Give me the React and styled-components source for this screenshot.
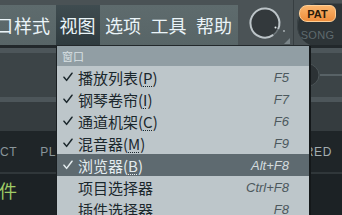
import React from "react";
import styled, { createGlobalStyle } from "styled-components";

const Global = createGlobalStyle`
  html, body { margin: 0; padding: 0; background: #1d2326; }
  body { width: 342px; height: 215px; overflow: hidden; }
`;

const Page = styled.div`
  position: relative;
  width: 342px;
  height: 215px;
  overflow: hidden;
  background: #1d2326;
  display: flex;
  flex-direction: column;
  font-family: "Noto Sans CJK SC", "Noto Sans", sans-serif;
`;

const TopBar = styled.div`
  height: 45px;
  flex: none;
  display: flex;
  background: #4a5255;
`;

const MenuPanel = styled.div`
  margin-top: 5px;
  width: 238px;
  flex: none;
  display: flex;
  gap: 1.5px;
  overflow: hidden;
  background: linear-gradient(#5e6b6d, #586567);
`;

const MenuItem = styled.div`
  flex: none;
  display: flex;
  align-items: center;
  padding: 0 4px;
  font-size: 18px;
  line-height: 1;
  color: #eaf4f8;
  background: ${(p) => (p.$active ? "linear-gradient(#3f4c50, #2f3b3f)" : "transparent")};
`;

const ClippedItem = styled(MenuItem)`
  padding: 0;
  margin-left: -5px;
  margin-right: -4.5px;
`;

const KnobPanel = styled.div`
  margin-left: 2px;
  width: 53px;
  flex: none;
  display: flex;
  border-right: 1px solid #373e41;
  background: #4b5356;
`;

const PatArea = styled.div`
  flex: 1;
  padding: 3px 0 0 3px;
  display: flex;
`;

const PatShape = styled.div`
  flex: 1;
  height: 42px;
  border-radius: 22px 0 0 22px;
  background: #2d3437;
  box-shadow: inset 1px 1px 0 #3c4447;
  display: flex;
  flex-direction: column;
  align-items: flex-start;
  padding: 2px 0 0 2px;
`;

const PatButton = styled.div`
  width: 37px;
  height: 17px;
  box-sizing: border-box;
  border-radius: 8px 6px 6px 8px;
  border: 1px solid #ffcf96;
  background: linear-gradient(#fbb56c, #ee8d3c);
  color: #2a1a0a;
  font-family: "Liberation Sans", sans-serif;
  font-size: 11px;
  font-weight: 700;
  display: flex;
  align-items: center;
  justify-content: center;
`;

const SongLabel = styled.div`
  width: 37px;
  margin-top: 7px;
  text-align: center;
  color: #5f6a6e;
  font-family: "Liberation Sans", sans-serif;
  font-size: 11px;
  letter-spacing: 0.3px;
`;

const Band = styled.div`
  flex: none;
  height: ${(p) => p.$h}px;
  background: ${(p) => p.$bg};
  position: relative;
  display: flex;
  align-items: center;
`;

const TabRow = styled.div`
  flex: none;
  height: 41px;
  background: #1f2528;
  display: flex;
  align-items: center;
  font-family: "Liberation Sans", sans-serif;
  font-size: 12px;
  color: #8a959a;
  letter-spacing: 0.6px;
`;

const Tab = styled.span`
  margin-left: ${(p) => p.$ml}px;
`;

const TabRight = styled.span`
  margin-left: auto;
  margin-right: 10px;
  color: #a3adb1;
`;

const Bottom = styled.div`
  flex: 1;
  background: #1c2225;
  padding-top: 4px;
`;

const GreenTitle = styled.div`
  margin-left: -1px;
  font-size: 18px;
  color: #9fcc66;
  line-height: 24px;
`;

const SideKnob = styled.div`
  margin-left: auto;
  display: flex;
  align-items: center;
`;

const SideLine = styled.div`
  width: 22px;
  height: 2px;
  background: #586266;
`;

const Dropdown = styled.div`
  position: absolute;
  left: 57px;
  top: 46px;
  width: 252px;
  border-right: 2px solid #14181a;
  box-shadow: -1px 0 0 #1a1f22;
  background: #bdc6ca;
`;

const DropHeader = styled.div`
  height: 20px;
  display: flex;
  align-items: center;
  padding-left: 5px;
  background: #919ea4;
  color: #d9e1e5;
  font-size: 11px;
`;

const Row = styled.div`
  height: 22px;
  display: flex;
  align-items: center;
  padding: 0 20px 0 6px;
  background: ${(p) => (p.$active ? "#5e6a70" : "transparent")};
  color: ${(p) => (p.$active ? "#e4ecef" : "#1b272c")};
`;

const CheckBox = styled.span`
  width: 15px;
  flex: none;
  display: flex;
  align-items: center;
`;

const Label = styled.span`
  font-size: 15px;
  line-height: 1;
  u {
    text-decoration: underline dotted;
    text-underline-offset: 2px;
    text-decoration-thickness: 1px;
  }
`;

const Shortcut = styled.span`
  margin-left: auto;
  font-family: "Liberation Sans", sans-serif;
  font-style: italic;
  font-size: 13px;
  color: ${(p) => (p.$active ? "#d3dbde" : "#4c585d")};
`;

const Check = ({ color }) => (
  <svg width="10" height="10" viewBox="0 0 10 10">
    <path d="M1 5.2 L3.6 8.4 L9 1.2" fill="none" stroke={color} strokeWidth="1.5" strokeLinecap="round" strokeLinejoin="round" />
  </svg>
);

const Knob = () => (
  <svg width="53" height="45" viewBox="0 0 53 45">
    <circle cx="25" cy="23" r="14.5" fill="#33393c" />
    <path
      d="M 38.1 29.1 A 14.5 14.5 0 1 0 33.3 34.9"
      fill="none"
      stroke="#bcc4c8"
      strokeWidth="2"
    />
    <path d="M 33.3 34.9 A 14.5 14.5 0 0 0 38.1 29.1" fill="none" stroke="#6e777b" strokeWidth="1.5" />
    <circle cx="35.5" cy="27.5" r="1" fill="#e6eef0" />
    <circle cx="44" cy="31" r="0.9" fill="#b0b8bb" />
    <path d="M44 44 L50 38 L50 44 Z" fill="#7b8589" />
  </svg>
);

const SmallKnob = () => (
  <svg width="24" height="26" viewBox="0 0 24 26">
    <circle cx="12" cy="13" r="11" fill="#2c3235" stroke="#4c5558" strokeWidth="1" />
    <path d="M12 6 L12 20" stroke="#f29a44" strokeWidth="1.5" />
  </svg>
);

const items = [
  { label: "播放列表", key: "P", sc: "F5", checked: true },
  { label: "钢琴卷帘", key: "I", sc: "F7", checked: true },
  { label: "通道机架", key: "C", sc: "F6", checked: true },
  { label: "混音器", key: "M", sc: "F9", checked: true },
  { label: "浏览器", key: "B", sc: "Alt+F8", checked: true, active: true },
  { label: "项目选择器", sc: "Ctrl+F8" },
  { label: "插件选择器", sc: "F8" },
];

export default function App() {
  return (
    <>
      <Global />
      <Page>
        <TopBar>
          <MenuPanel>
            <ClippedItem>口</ClippedItem>
            <MenuItem>样式</MenuItem>
            <MenuItem $active>视图</MenuItem>
            <MenuItem>选项</MenuItem>
            <MenuItem>工具</MenuItem>
            <MenuItem>帮助</MenuItem>
          </MenuPanel>
          <KnobPanel>
            <Knob />
          </KnobPanel>
          <PatArea>
            <PatShape>
              <PatButton>PAT</PatButton>
              <SongLabel>SONG</SongLabel>
            </PatShape>
          </PatArea>
        </TopBar>
        <Band $h={3} $bg="#22282b" />
        <Band $h={5} $bg="#4d565a" />
        <Band $h={44} $bg="#3c4447">
          <SideKnob>
            <SmallKnob />
            <SideLine />
          </SideKnob>
        </Band>
        <Band $h={5} $bg="#4d565a" />
        <Band $h={29} $bg="#353c3f" />
        <TabRow>
          <Tab $ml={0}>CT</Tab>
          <Tab $ml={23}>PLUGIN</Tab>
          <TabRight>STARRED</TabRight>
        </TabRow>
        <Band $h={2} $bg="#30373a" />
        <Bottom>
          <GreenTitle>件</GreenTitle>
        </Bottom>

        <Dropdown>
          <DropHeader>窗口</DropHeader>
          {items.map((it) => (
            <Row key={it.label} $active={it.active}>
              <CheckBox>{it.checked && <Check color={it.active ? "#e4ecef" : "#1b272c"} />}</CheckBox>
              <Label>
                {it.label}
                {it.key && (
                  <>
                    (<u>{it.key}</u>)
                  </>
                )}
              </Label>
              <Shortcut $active={it.active}>{it.sc}</Shortcut>
            </Row>
          ))}
        </Dropdown>
      </Page>
    </>
  );
}
